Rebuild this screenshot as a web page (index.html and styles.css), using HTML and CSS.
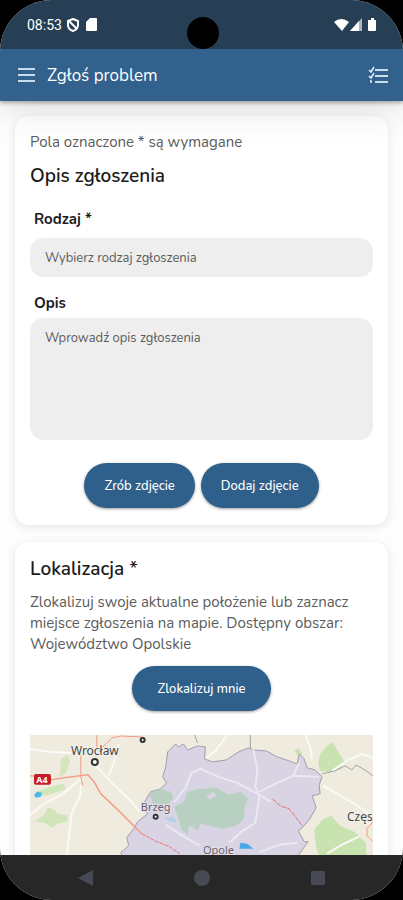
FILE: index.html
```html
<!DOCTYPE html>
<html lang="pl">
<head>
    <meta charset="UTF-8">
    <meta name="viewport" content="width=device-width, initial-scale=1.0">
    <title>Zgłoś problem</title>
    <link rel="stylesheet" href="styles.css">
</head>
<body>
    <div class="phone">
        <!-- Status bar -->
        <div class="status-bar">
            <div class="status-group">
                <span class="clock">08:53</span>
                <svg class="status-icon" viewBox="0 0 14 14" width="14" height="14">
                    <path d="M7 1 L12 3 V7 C12 10 10 12 7 13 C4 12 2 10 2 7 V3 Z" fill="none" stroke="#fff" stroke-width="2"/>
                    <path d="M3 3 L11 11" stroke="#fff" stroke-width="2"/>
                </svg>
                <svg class="status-icon sd-card" viewBox="0 0 12 14" width="12" height="14">
                    <path d="M4 0 H10 Q11 0 11 1 V12 Q11 13 10 13 H1 Q0 13 0 12 V4 Z" fill="#fff"/>
                </svg>
            </div>
            <div class="camera"></div>
            <div class="status-group">
                <svg class="status-icon" viewBox="0 0 44 14" width="44" height="14">
                    <path d="M0 4 Q7 -2 15 4 L8 13 Z" fill="#fff"/>
                    <path d="M16 13 L28 0 V13 Z" fill="#aab6c1"/>
                    <path d="M16 13 L25 3 V13 Z" fill="#fff"/>
                    <path d="M37 0 H40 V2 H42 V12 Q42 13 41 13 H35 Q34 13 34 12 V2 H37 Z" fill="#fff"/>
                </svg>
            </div>
        </div>

        <!-- Toolbar -->
        <header class="toolbar">
            <button class="icon-button" type="button" aria-label="Menu">
                <svg viewBox="0 0 18 16" width="18" height="16" stroke="#c8dcec" stroke-width="2">
                    <path d="M0 2 H17 M0 8 H17 M0 14 H17"/>
                </svg>
            </button>
            <h1>Zgłoś problem</h1>
            <button class="icon-button" type="button" aria-label="Lista zgłoszeń">
                <svg viewBox="0 0 20 18" width="20" height="18" fill="none" stroke="#c8dcec" stroke-width="2">
                    <path d="M7 4 H20 M7 10 H20 M7 16 H20"/>
                    <path d="M1 4 L3 6 L6 1 M1 10 L3 12 L6 7 M3 14 V17" stroke="#e8f1f8" stroke-width="1.5"/>
                </svg>
            </button>
        </header>

        <main class="content">
            <!-- Report form -->
            <form class="card">
                <p class="note">Pola oznaczone * są wymagane</p>
                <h2>Opis zgłoszenia</h2>

                <label for="kind">Rodzaj *</label>
                <select id="kind" required>
                    <option value="">Wybierz rodzaj zgłoszenia</option>
                </select>

                <label for="description">Opis</label>
                <textarea id="description" placeholder="Wprowadź opis zgłoszenia"></textarea>

                <div class="actions">
                    <button class="button" type="button">Zrób zdjęcie</button>
                    <button class="button" type="button">Dodaj zdjęcie</button>
                </div>
            </form>

            <!-- Location -->
            <section class="card">
                <h2>Lokalizacja *</h2>
                <p class="note">Zlokalizuj swoje aktualne położenie lub zaznacz miejsce zgłoszenia na mapie. Dostępny obszar: Województwo Opolskie</p>
                <div class="actions">
                    <button class="button button-wide" type="button">Zlokalizuj mnie</button>
                </div>

                <svg class="map" viewBox="0 0 344 200" role="img" aria-label="Mapa">
                    <rect width="344" height="200" fill="#efebdf"/>

                    <!-- Forests -->
                    <g fill="#c9e3b0">
                        <path d="M31 24 L38 20 L40 26 L36 38 L30 42 Z" opacity=".7"/>
                        <path d="M6 57 L20 52 L34 49 L36 54 L22 59 L8 62 Z" opacity=".8"/>
                        <path d="M15 79 L18 73 L24 75 L28 79 L38 81 L37 87 L27 89 L23 93 L14 88 L5 87 Z" opacity=".8"/>
                        <path d="M291 19 L298 11 L304 7 L308 15 L315 26 L312 34 L300 37 L291 36 L289 28 Z"/>
                        <path d="M285 95 L293 85 L302 81 L311 91 L325 97 L337 108 L338 130 H294 L287 113 Z"/>
                        <path d="M265 16 L269 13 L273 18 L270 22 Z"/>
                    </g>
                    <path d="M4 60 L7 57 L12 58 L11 62 L6 63 Z" fill="#4db9e8"/>

                    <!-- Local roads -->
                    <g fill="none" stroke="#fbfaf4" stroke-width="2">
                        <path d="M0 14 L22 17 L42 18"/>
                        <path d="M0 80 L14 69 L33 59 L51 44"/>
                        <path d="M51 50 L50 62 L42 78 L38 110 L36 130"/>
                        <path d="M66 31 L83 49 L101 66 L110 77"/>
                        <path d="M89 9 L84 28 L79 41"/>
                        <path d="M198 0 L186 16 L177 23"/>
                        <path d="M276 0 L281 12 L283 24"/>
                        <path d="M294 51 L312 61 L330 72 L344 82"/>
                        <path d="M303 36 L319 25 L333 19 L344 23"/>
                        <path d="M298 119 L313 110 L330 102"/>
                    </g>

                    <!-- Opole Voivodeship -->
                    <path class="region" d="M138 17 L146 9 L149 12 L154 9 L158 15 L168 11 L176 12 L175 24 L183 27 L197 25 L209 17 L219 13 L225 15 L237 16 L248 22 L260 26 L268 29 L270 19 L275 24 L278 33 L286 35 L293 42 L290 50 L291 59 L283 61 L287 73 L280 85 L272 94 L269 96 L275 107 L279 107 L271 118 L267 124 L272 200 H108 L96 130 L91 118 L99 111 L97 103 L104 94 L108 87 L118 79 L112 72 L121 57 L131 54 L137 48 L133 42 L136 33 Z"/>
                    <path d="M120 59 L131 54 L141 57 L144 63 L139 69 L124 70 Z M145 72 L154 67 L158 57 L165 55 L171 54 V90 L168 96 L160 90 L158 100 L152 95 Z M171 54 L187 53 L199 60 L211 57 L219 64 L215 73 L215 84 L207 91 L193 94 L171 89 Z" fill="#b8d0c2"/>
                    <path d="M177 61 L184 57 L187 61 L180 65 Z" fill="#d9d3e3"/>
                    <path d="M211 108 L218 109 L224 114 H210 Z" fill="#4ba8e8"/>
                    <path d="M135 83 L144 82 L147 88 L140 87 Z" fill="#b7cfe4"/>

                    <g fill="none" stroke="#ece8f2" stroke-width="2">
                        <path d="M136 90 L151 100 L170 111"/>
                        <path d="M145 67 L156 53 L162 38 L171 34 L189 42 L208 48 L230 60 L242 67"/>
                        <path d="M224 14 L228 35 L226 52 L230 62 L226 88 L212 97 L200 108"/>
                        <path d="M230 57 L246 49 L264 41 L290 42"/>
                        <path d="M264 41 L270 28"/>
                        <path d="M230 118 L250 110 L268 108"/>
                    </g>

                    <!-- Motorway -->
                    <g fill="none" stroke="#f59a85" stroke-width="1">
                        <path d="M21 45 L33 43 L58 40 L65 48 L71 59 L88 75 L106 93 L112 99" stroke-width="1.5"/>
                        <path d="M112 99 L125 106 L140 112 L150 119" stroke="#ee6f72" stroke-dasharray="4 1"/>
                        <path d="M243 64 L251 71 L260 74 L267 83 L273 91" stroke="#ee6f72" stroke-dasharray="5 1"/>
                        <path d="M51 20 V42 L53 51 M73 12 L82 3 L91 1 L113 2 M67 0 V13"/>
                        <path d="M344 87 L338 94 L338 101 L344 107"/>
                    </g>
                    <path d="M0 41 H5" stroke="#f58f78"/>
                    <rect x="4" y="39" width="17" height="11" rx="2" fill="#c61c23"/>
                    <text class="road-sign" x="12" y="48">A4</text>

                    <path d="M293 39 L306 36 L316 31 L323 35 L327 30 L336 35 L344 41 M165 0 L168 8 M221 14 V0" fill="none" stroke="#a7a3a5"/>

                    <!-- Cities -->
                    <g fill="#fff" stroke="#333" stroke-width="2">
                        <circle cx="65" cy="27" r="3"/>
                        <circle cx="113" cy="5" r="2"/>
                        <circle cx="126" cy="82" r="2"/>
                    </g>
                    <text class="city" x="65" y="20">Wrocław</text>
                    <text class="city town" x="126" y="76">Brzeg</text>
                    <text class="city town" x="189" y="119">Opole</text>
                    <text class="city edge" x="318" y="86">Częs</text>
                </svg>
            </section>
        </main>

        <!-- System navigation -->
        <nav class="system-nav">
            <button type="button" aria-label="Wstecz">
                <svg viewBox="0 0 16 16" width="16" height="16"><path d="M0 8 L15 0 V16 Z"/></svg>
            </button>
            <button type="button" aria-label="Ekran główny">
                <svg viewBox="0 0 16 16" width="16" height="16"><circle cx="8" cy="8" r="8"/></svg>
            </button>
            <button type="button" aria-label="Ostatnie">
                <svg viewBox="0 0 16 16" width="16" height="16"><rect x="1" y="1" width="14" height="14" rx="1"/></svg>
            </button>
        </nav>
    </div>
</body>
</html>
```

FILE: styles.css
```css
* {
    box-sizing: border-box;
}

body {
    margin: 0;
    background-color: #000;
    color: #1c1c1c;
    font-family: Nunito, Lato, sans-serif;
}

h1, h2, p {
    margin: 0;
}

button, select, textarea {
    border: none;
    font-family: inherit;
}

.phone {
    display: flex;
    flex-direction: column;
    height: 100vh;
    overflow: hidden;
    border-radius: 52px;
    background-color: #fdfdfd;
}

/* Status bar */
.status-bar {
    display: grid;
    position: relative;
    grid-template-columns: 1fr auto 1fr;
    flex-shrink: 0;
    height: 49px;
    padding: 17px 25px 0 27px;
    background-color: #263f55;
    color: #fff;
    z-index: 2;
}

.status-group {
    display: flex;
    align-items: flex-start;
    gap: 4px;
}

.status-group:last-child {
    justify-content: flex-end;
}

.clock {
    font-family: Roboto, sans-serif;
    font-size: 14px;
    line-height: 16px;
}

.status-icon {
    margin-top: 1px;
}

.sd-card {
    margin-left: 2px;
}

.camera {
    width: 32px;
    height: 32px;
    border-radius: 50%;
    background-color: #000;
}

/* Toolbar */
.toolbar {
    display: flex;
    align-items: center;
    gap: 11px;
    height: 52px;
    padding: 0 15px 0 18px;
    flex-shrink: 0;
    background-color: #31618c;
    color: #fff;
    box-shadow: 0 2px 4px rgba(0, 0, 0, 0.3), 0 4px 40px rgba(0, 0, 0, 0.15);
    z-index: 1;
}

.toolbar h1 {
    flex: 1;
    font-size: 17px;
    font-weight: 400;
}

.icon-button {
    display: flex;
    padding: 0;
    background: none;
    cursor: pointer;
}

/* Cards */
.content {
    display: flex;
    flex: 1;
    flex-direction: column;
    gap: 17px;
    min-height: 0;
    padding: 15px;
    overflow-y: auto;
    scrollbar-width: none;
}

.card {
    flex-shrink: 0;
    padding: 15px;
    border-radius: 14px;
    background-color: #fff;
    box-shadow: 0 2px 10px rgba(0, 0, 0, 0.1);
}

.card h2 {
    font-size: 19px;
    font-weight: 600;
    line-height: 24px;
}

.note {
    color: #5c5c5c;
    font-size: 15px;
    line-height: 21px;
}

form .note {
    margin: 1px 0 11px;
}

section .note {
    margin: 11px 0;
}

.card label {
    display: block;
    margin: 20px 4px 8px;
    font-size: 15px;
    font-weight: 700;
    line-height: 22px;
}

.card select + label {
    margin: 15px 4px 4px;
}

.card select,
.card textarea {
    display: block;
    width: 100%;
    padding: 10px 15px;
    border-radius: 14px;
    background-color: #eee;
    color: #5c5c5c;
    font-size: 13px;
    line-height: 20px;
}

.card select {
    height: 39px;
    appearance: none;
}

.card textarea {
    height: 122px;
    resize: none;
}

.card textarea::placeholder {
    color: #5c5c5c;
}

.actions {
    display: flex;
    justify-content: center;
    gap: 6px;
}

form .actions {
    margin: 23px 0 2px;
}

.button {
    height: 45px;
    padding: 0 20px;
    border-radius: 23px;
    background-color: #2f608b;
    color: #fff;
    font-size: 13px;
    font-weight: 500;
    box-shadow: 0 1px 3px rgba(0, 0, 0, 0.4);
    cursor: pointer;
}

.button-wide {
    padding: 0 26px;
}

/* Map */
.map {
    display: block;
    width: 100%;
    margin-top: 24px;
}

.region {
    fill: #d9d4e3;
    stroke: #a29bab;
}

.city {
    fill: #444;
    font-family: "Noto Sans", sans-serif;
    font-size: 12px;
    text-anchor: middle;
    paint-order: stroke;
    stroke: #f5f2ea;
    stroke-width: 2px;
}

.town {
    fill: #66616f;
    font-size: 11px;
    stroke: #e3dfea;
}

.edge {
    text-anchor: start;
}

.road-sign {
    fill: #fff;
    font-family: "Noto Sans", sans-serif;
    font-size: 9px;
    font-weight: 700;
    text-anchor: middle;
}

/* System navigation */
.system-nav {
    display: flex;
    align-items: center;
    justify-content: center;
    gap: 100px;
    height: 45px;
    flex-shrink: 0;
    background-color: #272727;
}

.system-nav button {
    display: flex;
    padding: 0;
    background: none;
}

.system-nav svg {
    fill: #474a54;
}
```
